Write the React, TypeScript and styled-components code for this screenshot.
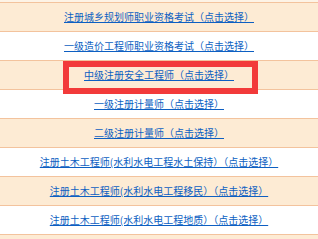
import React from "react";
import styled, { createGlobalStyle } from "styled-components";

const GlobalStyle = createGlobalStyle`
  html, body {
    margin: 0;
    padding: 0;
    background: #ffffff;
  }
`;

const exams = [
  "注册城乡规划师职业资格考试（点击选择）",
  "一级造价工程师职业资格考试（点击选择）",
  "中级注册安全工程师（点击选择）",
  "一级注册计量师（点击选择）",
  "二级注册计量师（点击选择）",
  "注册土木工程师(水利水电工程水土保持）（点击选择）",
  "注册土木工程师(水利水电工程移民）（点击选择）",
  "注册土木工程师(水利水电工程地质）（点击选择）",
  "",
];

const highlighted = 2;

export default function App() {
  return (
    <>
      <GlobalStyle />
      <List>
        {exams.map((name, i) => (
          <Row key={i} shaded={i % 2 === 0}>
            {name && <ExamLink href="#">{name}</ExamLink>}
            {i === highlighted && <Mark />}
          </Row>
        ))}
      </List>
    </>
  );
}

const List = styled.div`
  width: 318px;
  height: 239px;
  overflow: hidden;
  padding-top: 2px;
  box-sizing: border-box;
  background: #fdf3e6;
`;

const Row = styled.div<{ shaded: boolean }>`
  position: relative;
  height: 28px;
  border-top: 1px solid #f3c39d;
  background: ${props => (props.shaded ? "#fdebd4" : "#ffffff")};
  display: flex;
  align-items: center;
  justify-content: center;
`;

const ExamLink = styled.a`
  font-family: "Noto Sans CJK SC", "Noto Sans", sans-serif;
  font-size: 10px;
  line-height: 12px;
  color: #0d5fc2;
  text-decoration: underline;
  white-space: nowrap;
`;

const Mark = styled.div`
  position: absolute;
  left: 63px;
  top: 0;
  width: 195px;
  height: 33px;
  box-sizing: border-box;
  border: 6px solid #f23a3a;
  z-index: 2;
`;
